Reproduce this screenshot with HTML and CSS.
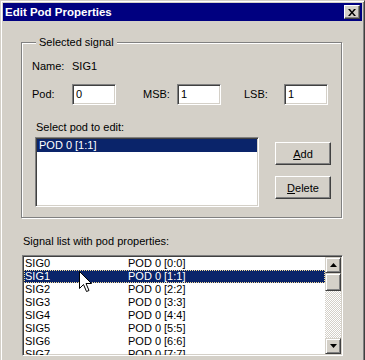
FILE: index.html
```html
<!DOCTYPE html>
<html lang="en">
<head>
    <meta charset="UTF-8">
    <title>Edit Pod Properties</title>
    <link rel="stylesheet" href="styles.css">
</head>
<body>

    <div class="window">
        <div class="titlebar">
            <span class="title">Edit Pod Properties</span>
            <button class="close-btn" title="Close">
                <svg width="8" height="7" viewBox="0 0 8 7">
                    <path d="M0 0h2l2 2.5 2-2.5h2L5 3.5 8 7H6L4 4.5 2 7H0l3-3.5z" fill="#000"/>
                </svg>
            </button>
        </div>

        <div class="client">
            <fieldset class="group">
                <legend>Selected signal</legend>

                <div class="row name-row">
                    <span class="lbl">Name:</span>
                    <span>SIG1</span>
                </div>

                <div class="row field-row">
                    <label class="lbl">Pod:</label>
                    <input type="text" class="edit" value="0">
                    <label class="lbl lbl-msb">MSB:</label>
                    <input type="text" class="edit" value="1">
                    <label class="lbl lbl-lsb">LSB:</label>
                    <input type="text" class="edit" value="1">
                </div>

                <div class="pod-caption">Select pod to edit:</div>
                <div class="pod-area">
                    <div class="listbox pod-list">
                        <div class="item selected">POD 0 [1:1]</div>
                    </div>
                    <div class="side-buttons">
                        <button class="btn"><u>A</u>dd</button>
                        <button class="btn"><u>D</u>elete</button>
                    </div>
                </div>
            </fieldset>

            <div class="list-caption">Signal list with pod properties:</div>
            <div class="listbox signal-list">
                <div class="rows" id="rows">
                    <!-- filled by script -->
                </div>
                <div class="scrollbar">
                    <div class="sb-btn">
                        <svg width="7" height="4" viewBox="0 0 7 4"><path d="M3.5 0L7 4H0z" fill="#000"/></svg>
                    </div>
                    <div class="sb-thumb"></div>
                    <div class="sb-track"></div>
                    <div class="sb-btn">
                        <svg width="7" height="4" viewBox="0 0 7 4"><path d="M0 0h7L3.5 4z" fill="#000"/></svg>
                    </div>
                </div>
                <svg class="cursor" width="13" height="22" viewBox="0 0 13 22">
                    <path d="M0.5 0.5V17.5L4.5 13.5L7.5 20.5L10 19.5L7 12.5H12.5Z" fill="#fff" stroke="#000" stroke-width="1"/>
                </svg>
            </div>
        </div>
    </div>

    <script>
        const rows = document.getElementById('rows');
        for (let i = 0; i < 8; i++) {
            const row = document.createElement('div');
            row.className = 'sig-row' + (i === 1 ? ' selected' : '');
            row.innerHTML = `<span class="sig-name">SIG${i}</span><span>POD 0 [${i}:${i}]</span>`;
            rows.appendChild(row);
        }
    </script>
</body>
</html>
```

FILE: styles.css
```css
body {
    margin: 0;
    background-color: #d4d0c8;
    font-family: 'Liberation Sans', Arial, sans-serif;
    font-size: 11px;
    line-height: 13px;
    color: #000000;
    overflow: hidden;
}

.window {
    width: 365px;
    height: 372px;
    box-sizing: border-box;
    border: 1px solid;
    border-color: #d4d0c8 #404040 #404040 #d4d0c8;
    box-shadow: inset 1px 1px #ffffff, inset -1px -1px #808080;
    padding: 2px;
}

.titlebar {
    height: 18px;
    background-color: #000080;
    display: flex;
    align-items: center;
    justify-content: space-between;
    padding-left: 2px;
}

.title {
    color: #ffffff;
    font-weight: bold;
    font-size: 11.5px;
}

.close-btn {
    width: 16px;
    height: 14px;
    margin-right: 2px;
    padding: 0;
    display: flex;
    align-items: center;
    justify-content: center;
    background-color: #d4d0c8;
    border: 1px solid;
    border-color: #ffffff #404040 #404040 #ffffff;
    box-shadow: inset -1px -1px #808080;
}

.client {
    padding-top: 15px;
}

/* group box */
.group {
    width: 321px;
    box-sizing: border-box;
    margin: 0 0 0 18px;
    padding: 0 0 10px 10px;
    border: 1px solid #808080;
    box-shadow: 1px 1px 0 #ffffff, inset 1px 1px 0 #ffffff;
}

.group legend {
    margin-left: 4px;
    padding: 0 3px;
    background-color: #d4d0c8;
}

.row {
    display: flex;
    align-items: center;
}

.name-row {
    margin-top: 11px;
}

.field-row {
    margin-top: 11px;
}

.lbl {
    width: 40px;
}

.lbl-msb {
    width: 34px;
    margin-left: 27px;
}

.lbl-lsb {
    margin-left: 23px;
}

.edit {
    width: 44px;
    height: 21px;
    box-sizing: border-box;
    margin: 0;
    padding: 0 0 2px 3px;
    font-family: inherit;
    font-size: 11px;
    border: 1px solid;
    border-color: #808080 #ffffff #ffffff #808080;
    box-shadow: inset 1px 1px #404040, inset -1px -1px #d4d0c8;
    background-color: #ffffff;
    outline: none;
}

.pod-caption {
    margin: 16px 0 0 4px;
}

.pod-area {
    display: flex;
    margin-top: 3px;
}

.listbox {
    box-sizing: border-box;
    background-color: #ffffff;
    border: 1px solid;
    border-color: #808080 #ffffff #ffffff #808080;
    box-shadow: inset 1px 1px #404040, inset -1px -1px #d4d0c8;
    padding: 1px;
}

.pod-list {
    width: 224px;
    height: 70px;
    margin-left: 3px;
}

.item {
    padding-left: 2px;
    height: 13px;
}

.selected {
    background-color: #0a246a;
    color: #ffffff;
}

.side-buttons {
    display: flex;
    flex-direction: column;
    gap: 11px;
    margin: 5px 0 0 16px;
}

.btn {
    width: 56px;
    height: 23px;
    padding: 0;
    font-family: inherit;
    font-size: 11px;
    background-color: #d4d0c8;
    border: 1px solid;
    border-color: #ffffff #404040 #404040 #ffffff;
    box-shadow: inset -1px -1px #808080;
}

/* signal list */
.list-caption {
    margin: 17px 0 0 20px;
}

.signal-list {
    position: relative;
    width: 321px;
    height: 101px;
    margin: 7px 0 0 19px;
    display: flex;
    overflow: hidden;
}

.rows {
    flex: 1;
}

.sig-row {
    display: flex;
    height: 13px;
    padding-left: 1px;
}

.sig-row.selected {
    outline: 1px dotted #f5db95;
    outline-offset: -1px;
}

.sig-name {
    width: 103px;
}

.scrollbar {
    width: 16px;
    display: flex;
    flex-direction: column;
}

.sb-btn,
.sb-thumb {
    box-sizing: border-box;
    height: 16px;
    display: flex;
    align-items: center;
    justify-content: center;
    background-color: #d4d0c8;
    border: 1px solid;
    border-color: #d4d0c8 #404040 #404040 #d4d0c8;
    box-shadow: inset 1px 1px #ffffff, inset -1px -1px #808080;
}

.sb-thumb {
    height: 18px;
}

.sb-track {
    flex: 1;
    background: repeating-conic-gradient(#d4d0c8 0 25%, #ffffff 0 50%) 0 0 / 2px 2px;
}

.cursor {
    position: absolute;
    left: 56px;
    top: 15px;
}
```
